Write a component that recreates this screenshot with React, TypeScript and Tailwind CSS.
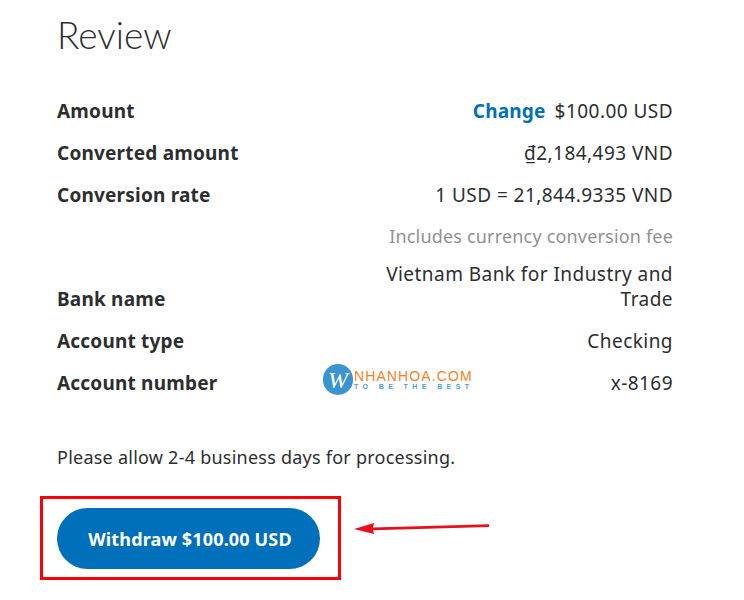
const rows = [
  { label: "Converted amount", value: "₫2,184,493 VND" },
  { label: "Conversion rate", value: "1 USD = 21,844.9335 VND" },
];

const lowerRows = [
  { label: "Account type", value: "Checking" },
  { label: "Account number", value: "x-8169" },
];

const labelClass = "text-[19px] font-bold tracking-[0.2px] text-[#2c2e2f]";
const valueClass = "text-[19px] tracking-[0.45px] text-right text-[#2c2e2f]";

export default function App() {
  return (
    <div className="relative w-[744px] h-[600px] overflow-hidden bg-white font-['Noto_Sans',sans-serif] leading-[26px]">
      <div className="flex flex-col pl-[57px] pr-[71px] pt-[13px]">
        <h1 className="font-['Lato',sans-serif] font-light text-[37px] leading-[44px] text-[#2c2e2f]">Review</h1>

        <div className="flex flex-col mt-[41px]">
          <div className="flex justify-between items-center h-[26px]">
            <span className={labelClass}>Amount</span>
            <span className={valueClass}>
              <span className="font-bold tracking-[0.2px] text-[#0070ba] mr-[9px]">Change</span>$100.00 USD
            </span>
          </div>
          {rows.map((r) => (
            <div key={r.label} className="flex justify-between items-center h-[26px] mt-[16px]">
              <span className={labelClass}>{r.label}</span>
              <span className={valueClass}>{r.value}</span>
            </div>
          ))}
          <div className="text-right text-[18px] tracking-[0.18px] text-[#8f9294] mt-[15px]">Includes currency conversion fee</div>
          <div className="flex justify-between items-end mt-[13px]">
            <span className={labelClass}>Bank name</span>
            <span className={`${valueClass} w-[300px] leading-[25px]`}>Vietnam Bank for Industry and Trade</span>
          </div>
          {lowerRows.map((r) => (
            <div key={r.label} className="flex justify-between items-center h-[26px] mt-[16px]">
              <span className={labelClass}>{r.label}</span>
              <span className={valueClass}>{r.value}</span>
            </div>
          ))}
        </div>

        <p className="text-[18px] tracking-[0.24px] text-[#2c2e2f] mt-[48px]">Please allow 2-4 business days for processing.</p>

        <div className="flex items-start mt-[26px] -ml-[17px]">
          <div className="w-[301px] h-[84px] border-[3px] border-[#fb0007] flex items-center pl-[14px]">
            <button className="w-[263px] h-[61px] pl-[3px] pt-[1px] rounded-full bg-[#0070ba] text-white font-bold text-[18px] tracking-[0.15px]">
              Withdraw $100.00 USD
            </button>
          </div>
          <svg className="ml-[13px] mt-[23px]" width="136" height="16" viewBox="0 0 136 16">
            <path d="M0 10 L20 4 L19 8.6 L135 5.2 L135 8 L19 11.2 L20 15 Z" fill="#e8101a" />
          </svg>
        </div>
      </div>

      {/* watermark over the table */}
      <div className="absolute left-[323px] top-[364px] flex items-center">
        <div className="w-[30px] h-[31px] rounded-full bg-[#3b93d0] flex items-center justify-center font-['Liberation_Serif',serif] italic text-white text-[24px] leading-none">
          W
        </div>
        <div className="flex flex-col ml-[1px] font-['Liberation_Sans',sans-serif]">
          <span className="text-[14px] tracking-[1.1px] leading-[14px] text-[#f58220] whitespace-nowrap">NHANHOA.COM</span>
          <span className="text-[7px] leading-[8px] font-bold tracking-[4.4px] text-[#4a9ed6] whitespace-nowrap">TO BE THE BEST</span>
        </div>
      </div>
    </div>
  );
}
